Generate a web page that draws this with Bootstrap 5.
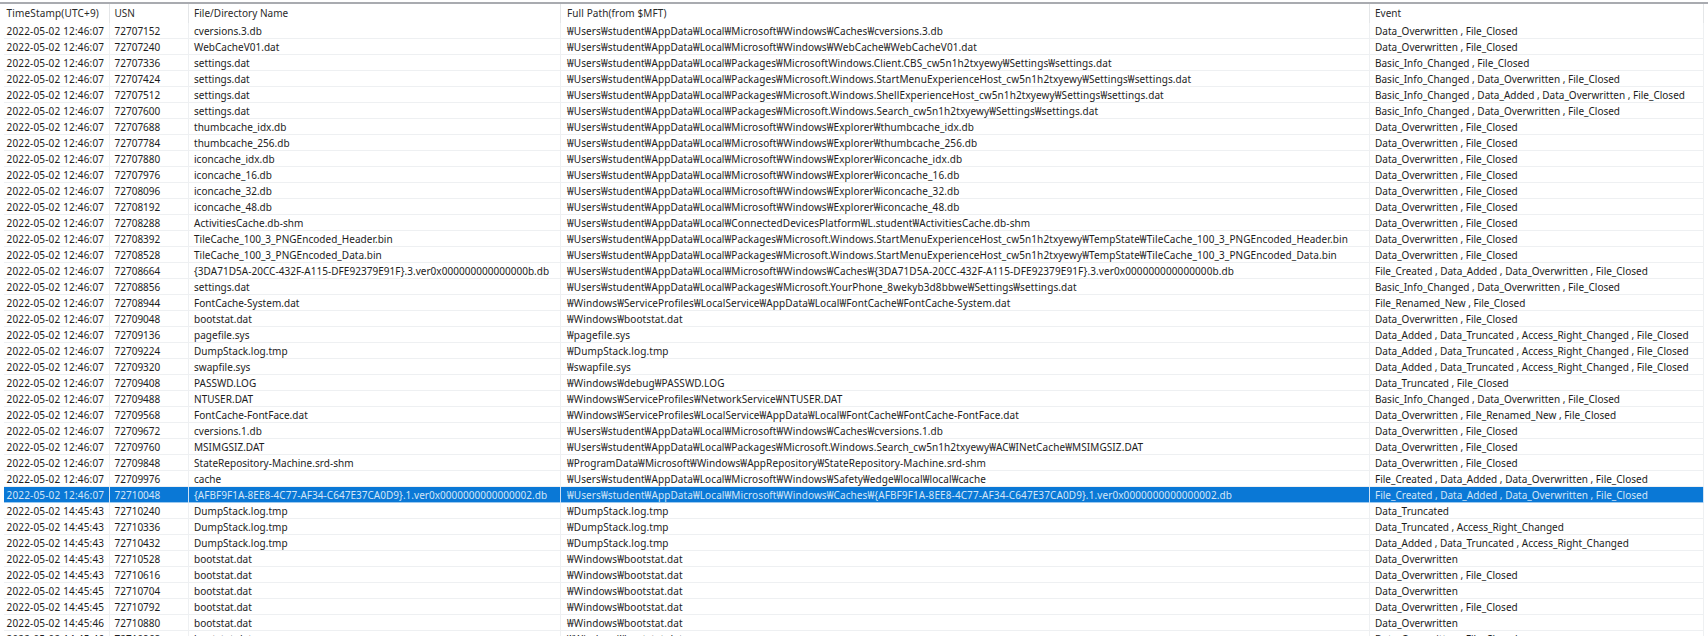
<!DOCTYPE html>
<html lang="ko">
<head>
<meta charset="utf-8">
<title>USN Journal</title>
<link rel="stylesheet" href="https://cdn.jsdelivr.net/npm/bootstrap@5.3.0/dist/css/bootstrap.min.css">
<style>
html,body{height:636px;overflow:hidden;background:#fff}
.logwrap{border-top:2px solid #a9abb0;margin-top:2px;padding-left:4px;padding-right:4px}
.logtbl.table{table-layout:fixed;width:1700px;margin:0;font-family:"Noto Sans","Liberation Sans",sans-serif;font-size:10px;color:#1c1c1c;--bs-table-border-color:#eef0f2;border-collapse:separate;border-spacing:0}
.logtbl.table>:not(caption)>*>*{padding:1px 0 0 5px;height:16px;line-height:15px;white-space:nowrap;overflow:hidden;border-width:0 1px 0 0;border-style:solid;border-color:#eef0f2;box-shadow:inset 0 -1px 0 #eef0f2;background:transparent;color:inherit}
.logtbl.table>:not(caption)>*>*:nth-child(1){padding-left:2.5px;letter-spacing:.17px}
.logtbl.table>:not(caption)>*>*:nth-child(2){padding-left:4.5px}
.logtbl.table>:not(caption)>*>*:nth-child(3){letter-spacing:.03px}
.logtbl.table>:not(caption)>*>*:nth-child(4){padding-left:6px;letter-spacing:.1px}
.logtbl.table>thead>tr>th{height:19px;padding-top:0;font-weight:400;color:#2a2a2a;box-shadow:none;line-height:19px;border-right-color:#e4e6e8}
.logtbl.table>tbody>tr.rowsel>td{background:#0a78d6;color:#d3e6f8;border-color:#cfe2f4;box-shadow:inset 0 -1px 0 #9cc8ee}
</style>
</head>
<body class="m-0">
<div class="logwrap">
<table class="table logtbl">
<colgroup><col style="width:106px"><col style="width:79px"><col style="width:372px"><col style="width:809px"><col style="width:334px"></colgroup>
<thead><tr><th>TimeStamp(UTC+9)</th><th>USN</th><th>File/Directory Name</th><th>Full Path(from $MFT)</th><th>Event</th></tr></thead>
<tbody>
<tr><td>2022-05-02 12:46:07</td><td>72707152</td><td>cversions.3.db</td><td>₩Users₩student₩AppData₩Local₩Microsoft₩Windows₩Caches₩cversions.3.db</td><td>Data_Overwritten , File_Closed</td></tr>
<tr><td>2022-05-02 12:46:07</td><td>72707240</td><td>WebCacheV01.dat</td><td>₩Users₩student₩AppData₩Local₩Microsoft₩Windows₩WebCache₩WebCacheV01.dat</td><td>Data_Overwritten , File_Closed</td></tr>
<tr><td>2022-05-02 12:46:07</td><td>72707336</td><td>settings.dat</td><td>₩Users₩student₩AppData₩Local₩Packages₩MicrosoftWindows.Client.CBS_cw5n1h2txyewy₩Settings₩settings.dat</td><td>Basic_Info_Changed , File_Closed</td></tr>
<tr><td>2022-05-02 12:46:07</td><td>72707424</td><td>settings.dat</td><td>₩Users₩student₩AppData₩Local₩Packages₩Microsoft.Windows.StartMenuExperienceHost_cw5n1h2txyewy₩Settings₩settings.dat</td><td>Basic_Info_Changed , Data_Overwritten , File_Closed</td></tr>
<tr><td>2022-05-02 12:46:07</td><td>72707512</td><td>settings.dat</td><td>₩Users₩student₩AppData₩Local₩Packages₩Microsoft.Windows.ShellExperienceHost_cw5n1h2txyewy₩Settings₩settings.dat</td><td>Basic_Info_Changed , Data_Added , Data_Overwritten , File_Closed</td></tr>
<tr><td>2022-05-02 12:46:07</td><td>72707600</td><td>settings.dat</td><td>₩Users₩student₩AppData₩Local₩Packages₩Microsoft.Windows.Search_cw5n1h2txyewy₩Settings₩settings.dat</td><td>Basic_Info_Changed , Data_Overwritten , File_Closed</td></tr>
<tr><td>2022-05-02 12:46:07</td><td>72707688</td><td>thumbcache_idx.db</td><td>₩Users₩student₩AppData₩Local₩Microsoft₩Windows₩Explorer₩thumbcache_idx.db</td><td>Data_Overwritten , File_Closed</td></tr>
<tr><td>2022-05-02 12:46:07</td><td>72707784</td><td>thumbcache_256.db</td><td>₩Users₩student₩AppData₩Local₩Microsoft₩Windows₩Explorer₩thumbcache_256.db</td><td>Data_Overwritten , File_Closed</td></tr>
<tr><td>2022-05-02 12:46:07</td><td>72707880</td><td>iconcache_idx.db</td><td>₩Users₩student₩AppData₩Local₩Microsoft₩Windows₩Explorer₩iconcache_idx.db</td><td>Data_Overwritten , File_Closed</td></tr>
<tr><td>2022-05-02 12:46:07</td><td>72707976</td><td>iconcache_16.db</td><td>₩Users₩student₩AppData₩Local₩Microsoft₩Windows₩Explorer₩iconcache_16.db</td><td>Data_Overwritten , File_Closed</td></tr>
<tr><td>2022-05-02 12:46:07</td><td>72708096</td><td>iconcache_32.db</td><td>₩Users₩student₩AppData₩Local₩Microsoft₩Windows₩Explorer₩iconcache_32.db</td><td>Data_Overwritten , File_Closed</td></tr>
<tr><td>2022-05-02 12:46:07</td><td>72708192</td><td>iconcache_48.db</td><td>₩Users₩student₩AppData₩Local₩Microsoft₩Windows₩Explorer₩iconcache_48.db</td><td>Data_Overwritten , File_Closed</td></tr>
<tr><td>2022-05-02 12:46:07</td><td>72708288</td><td>ActivitiesCache.db-shm</td><td>₩Users₩student₩AppData₩Local₩ConnectedDevicesPlatform₩L.student₩ActivitiesCache.db-shm</td><td>Data_Overwritten , File_Closed</td></tr>
<tr><td>2022-05-02 12:46:07</td><td>72708392</td><td>TileCache_100_3_PNGEncoded_Header.bin</td><td>₩Users₩student₩AppData₩Local₩Packages₩Microsoft.Windows.StartMenuExperienceHost_cw5n1h2txyewy₩TempState₩TileCache_100_3_PNGEncoded_Header.bin</td><td>Data_Overwritten , File_Closed</td></tr>
<tr><td>2022-05-02 12:46:07</td><td>72708528</td><td>TileCache_100_3_PNGEncoded_Data.bin</td><td>₩Users₩student₩AppData₩Local₩Packages₩Microsoft.Windows.StartMenuExperienceHost_cw5n1h2txyewy₩TempState₩TileCache_100_3_PNGEncoded_Data.bin</td><td>Data_Overwritten , File_Closed</td></tr>
<tr><td>2022-05-02 12:46:07</td><td>72708664</td><td>{3DA71D5A-20CC-432F-A115-DFE92379E91F}.3.ver0x000000000000000b.db</td><td>₩Users₩student₩AppData₩Local₩Microsoft₩Windows₩Caches₩{3DA71D5A-20CC-432F-A115-DFE92379E91F}.3.ver0x000000000000000b.db</td><td>File_Created , Data_Added , Data_Overwritten , File_Closed</td></tr>
<tr><td>2022-05-02 12:46:07</td><td>72708856</td><td>settings.dat</td><td>₩Users₩student₩AppData₩Local₩Packages₩Microsoft.YourPhone_8wekyb3d8bbwe₩Settings₩settings.dat</td><td>Basic_Info_Changed , Data_Overwritten , File_Closed</td></tr>
<tr><td>2022-05-02 12:46:07</td><td>72708944</td><td>FontCache-System.dat</td><td>₩Windows₩ServiceProfiles₩LocalService₩AppData₩Local₩FontCache₩FontCache-System.dat</td><td>File_Renamed_New , File_Closed</td></tr>
<tr><td>2022-05-02 12:46:07</td><td>72709048</td><td>bootstat.dat</td><td>₩Windows₩bootstat.dat</td><td>Data_Overwritten , File_Closed</td></tr>
<tr><td>2022-05-02 12:46:07</td><td>72709136</td><td>pagefile.sys</td><td>₩pagefile.sys</td><td>Data_Added , Data_Truncated , Access_Right_Changed , File_Closed</td></tr>
<tr><td>2022-05-02 12:46:07</td><td>72709224</td><td>DumpStack.log.tmp</td><td>₩DumpStack.log.tmp</td><td>Data_Added , Data_Truncated , Access_Right_Changed , File_Closed</td></tr>
<tr><td>2022-05-02 12:46:07</td><td>72709320</td><td>swapfile.sys</td><td>₩swapfile.sys</td><td>Data_Added , Data_Truncated , Access_Right_Changed , File_Closed</td></tr>
<tr><td>2022-05-02 12:46:07</td><td>72709408</td><td>PASSWD.LOG</td><td>₩Windows₩debug₩PASSWD.LOG</td><td>Data_Truncated , File_Closed</td></tr>
<tr><td>2022-05-02 12:46:07</td><td>72709488</td><td>NTUSER.DAT</td><td>₩Windows₩ServiceProfiles₩NetworkService₩NTUSER.DAT</td><td>Basic_Info_Changed , Data_Overwritten , File_Closed</td></tr>
<tr><td>2022-05-02 12:46:07</td><td>72709568</td><td>FontCache-FontFace.dat</td><td>₩Windows₩ServiceProfiles₩LocalService₩AppData₩Local₩FontCache₩FontCache-FontFace.dat</td><td>Data_Overwritten , File_Renamed_New , File_Closed</td></tr>
<tr><td>2022-05-02 12:46:07</td><td>72709672</td><td>cversions.1.db</td><td>₩Users₩student₩AppData₩Local₩Microsoft₩Windows₩Caches₩cversions.1.db</td><td>Data_Overwritten , File_Closed</td></tr>
<tr><td>2022-05-02 12:46:07</td><td>72709760</td><td>MSIMGSIZ.DAT</td><td>₩Users₩student₩AppData₩Local₩Packages₩Microsoft.Windows.Search_cw5n1h2txyewy₩AC₩INetCache₩MSIMGSIZ.DAT</td><td>Data_Overwritten , File_Closed</td></tr>
<tr><td>2022-05-02 12:46:07</td><td>72709848</td><td>StateRepository-Machine.srd-shm</td><td>₩ProgramData₩Microsoft₩Windows₩AppRepository₩StateRepository-Machine.srd-shm</td><td>Data_Overwritten , File_Closed</td></tr>
<tr><td>2022-05-02 12:46:07</td><td>72709976</td><td>cache</td><td>₩Users₩student₩AppData₩Local₩Microsoft₩Windows₩Safety₩edge₩local₩local₩cache</td><td>File_Created , Data_Added , Data_Overwritten , File_Closed</td></tr>
<tr class="rowsel"><td>2022-05-02 12:46:07</td><td>72710048</td><td>{AFBF9F1A-8EE8-4C77-AF34-C647E37CA0D9}.1.ver0x0000000000000002.db</td><td>₩Users₩student₩AppData₩Local₩Microsoft₩Windows₩Caches₩{AFBF9F1A-8EE8-4C77-AF34-C647E37CA0D9}.1.ver0x0000000000000002.db</td><td>File_Created , Data_Added , Data_Overwritten , File_Closed</td></tr>
<tr><td>2022-05-02 14:45:43</td><td>72710240</td><td>DumpStack.log.tmp</td><td>₩DumpStack.log.tmp</td><td>Data_Truncated</td></tr>
<tr><td>2022-05-02 14:45:43</td><td>72710336</td><td>DumpStack.log.tmp</td><td>₩DumpStack.log.tmp</td><td>Data_Truncated , Access_Right_Changed</td></tr>
<tr><td>2022-05-02 14:45:43</td><td>72710432</td><td>DumpStack.log.tmp</td><td>₩DumpStack.log.tmp</td><td>Data_Added , Data_Truncated , Access_Right_Changed</td></tr>
<tr><td>2022-05-02 14:45:43</td><td>72710528</td><td>bootstat.dat</td><td>₩Windows₩bootstat.dat</td><td>Data_Overwritten</td></tr>
<tr><td>2022-05-02 14:45:43</td><td>72710616</td><td>bootstat.dat</td><td>₩Windows₩bootstat.dat</td><td>Data_Overwritten , File_Closed</td></tr>
<tr><td>2022-05-02 14:45:45</td><td>72710704</td><td>bootstat.dat</td><td>₩Windows₩bootstat.dat</td><td>Data_Overwritten</td></tr>
<tr><td>2022-05-02 14:45:45</td><td>72710792</td><td>bootstat.dat</td><td>₩Windows₩bootstat.dat</td><td>Data_Overwritten , File_Closed</td></tr>
<tr><td>2022-05-02 14:45:46</td><td>72710880</td><td>bootstat.dat</td><td>₩Windows₩bootstat.dat</td><td>Data_Overwritten</td></tr>
<tr><td>2022-05-02 14:45:46</td><td>72710968</td><td>bootstat.dat</td><td>₩Windows₩bootstat.dat</td><td>Data_Overwritten , File_Closed</td></tr>
</tbody>
</table>
</div>
<script src="https://cdn.jsdelivr.net/npm/bootstrap@5.3.0/dist/js/bootstrap.bundle.min.js"></script>
</body>
</html>
